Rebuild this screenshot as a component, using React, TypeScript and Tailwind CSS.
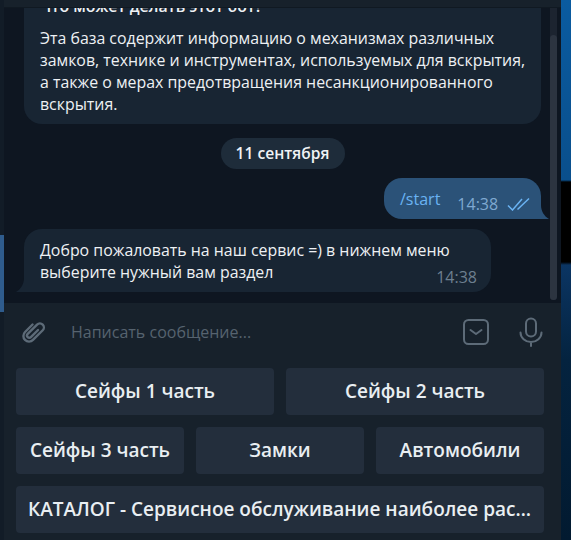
const Time = ({ children, className }: { children: string; className: string }) => (
  <span className={`text-[16px] leading-5 ${className}`}>{children}</span>
);

const KeyButton = ({ label, className = "" }: { label: string; className?: string }) => (
  <button className={`h-[47px] min-w-0 rounded-[4px] bg-[#232e3c] px-3 text-[19px] font-semibold text-[#e9eef2] truncate ${className}`}>
    {label}
  </button>
);

const App = () => {
  return (
    <div className="flex h-[540px] w-[571px] overflow-hidden bg-[#0e1621] font-['Open_Sans',sans-serif]">
      {/* Sliver of the chat list on the left */}
      <div className="flex w-1 flex-col bg-[#121c27]">
        <div className="h-[235px]" />
        <div className="h-[77px] bg-[#2f5c8d]" />
      </div>

      <div className="flex min-w-0 flex-1 flex-col">
        <div className="h-2 shrink-0 border-b border-[#101922] bg-[#17212b]" />

        {/* Messages */}
        <div className="flex h-[295px] shrink-0">
          <div className="flex min-w-0 flex-1 flex-col justify-end overflow-hidden pl-5 pr-[9px] pb-[11px]">
            <div className="shrink-0 whitespace-nowrap rounded-b-[18px] bg-[#182533] px-4 pb-[9px] text-[15.9px] leading-[22px] text-[#eef1f4]">
              <p className="mb-[10px] font-semibold">Что может делать этот бот?</p>
              <p>
                Эта база содержит информацию о механизмах различных
                <br />
                замков, технике и инструментах, используемых для вскрытия,
                <br />
                а также о мерах предотвращения несанкционированного
                <br />
                вскрытия.
              </p>
            </div>

            <div className="mt-[14px] flex shrink-0 justify-center">
              <span className="flex h-[31px] w-[124px] items-center justify-center rounded-full bg-[#1e2c3a] text-[15.6px] font-semibold text-[#f0f3f5]">
                11 сентября
              </span>
            </div>

            <div className="mt-[9px] flex shrink-0 justify-end">
              <div className="relative flex h-[41px] w-[157px] rounded-[18px] rounded-br-none bg-[#2b5278] pl-4">
                <span className="mt-[11px] text-[16px] leading-5 text-[#6ab3f3]">/start</span>
                <Time className="mt-[16px] ml-[17px] text-[#7fa9d1]">14:38</Time>
                <svg className="mt-[19px] ml-[9px] h-[14px] w-[24px]" viewBox="0 0 24 14" fill="none" stroke="#6ab3f3" strokeWidth="1.5">
                  <path d="M1 8.5l4.5 4.5L15 2" />
                  <path d="M10.5 12.5L22 1.5" />
                </svg>
                <svg className="absolute -right-2 bottom-0 h-[14px] w-2" viewBox="0 0 8 14" fill="#2b5278">
                  <path d="M0 0c0 6 3 11 8 14H0z" />
                </svg>
              </div>
            </div>

            <div className="mt-[10px] flex shrink-0">
              <div className="relative h-[63px] w-[467px] rounded-[18px] rounded-bl-none bg-[#182533] px-4 pt-[10px] text-[15.9px] leading-[22px] text-[#eef1f4]">
                <p>
                  Добро пожаловать на наш сервис =) в нижнем меню
                  <br />
                  выберите нужный вам раздел
                </p>
                <Time className="absolute right-[14px] bottom-[5px] text-[#6d7f8f]">14:38</Time>
                <svg className="absolute -left-2 bottom-0 h-[14px] w-2" viewBox="0 0 8 14" fill="#182533">
                  <path d="M8 0c0 6-3 11-8 14h8z" />
                </svg>
              </div>
            </div>
          </div>

          {/* Scrollbar */}
          <div className="mr-1 h-[292px] w-[7px] shrink-0 rounded-b-full bg-[#1c2430] pt-[27px]">
            <div className="h-full rounded-full bg-[#2c3440]" />
          </div>
        </div>

        {/* Composer */}
        <div className="flex min-h-0 flex-1 flex-col bg-[#17212b]">
          <div className="mb-[7px] flex h-[58px] shrink-0 items-center pl-[14px] text-[#5d6b78]">
            <svg className="h-[30px] w-[30px]" viewBox="0 0 24 24" fill="none" stroke="currentColor" strokeWidth="1.9" strokeLinecap="round">
              <path transform="rotate(45 12 12)" d="M7.5 8v8.5a4.5 4.5 0 0 0 9 0V5.5a3.2 3.2 0 0 0-6.4 0v10.6a1.8 1.8 0 0 0 3.6 0V8" />
            </svg>
            <span className="ml-[23px] flex-1 text-[16px] text-[#56636f]">Написать сообщение...</span>
            <svg className="h-[28px] w-[28px]" viewBox="0 0 28 28" fill="none" stroke="currentColor" strokeWidth="2" strokeLinecap="round" strokeLinejoin="round">
              <rect x="2" y="2" width="24" height="24" rx="4.5" />
              <path d="M8.5 12l5.5 4 5.5-4" />
            </svg>
            <svg className="ml-[27px] mr-[16px] h-[30px] w-[28px]" viewBox="0 0 28 30" fill="none" stroke="currentColor" strokeWidth="2" strokeLinecap="round">
              <rect x="9" y="1.5" width="10" height="18" rx="5" />
              <path d="M3.5 15.5a10.5 9.5 0 0 0 21 0M14 25v4" />
            </svg>
          </div>

          {/* Bot keyboard */}
          <div className="flex flex-col gap-3 pl-3 pr-[17px]">
            <div className="grid grid-cols-2 gap-3">
              <KeyButton label="Сейфы 1 часть" />
              <KeyButton label="Сейфы 2 часть" />
            </div>
            <div className="grid grid-cols-3 gap-3">
              <KeyButton label="Сейфы 3 часть" />
              <KeyButton label="Замки" />
              <KeyButton label="Автомобили" />
            </div>
            <KeyButton label="КАТАЛОГ - Сервисное обслуживание наиболее распространённых" />
          </div>
        </div>
      </div>

      {/* Wallpaper behind the window */}
      <div className="w-[10px] shrink-0 bg-[linear-gradient(180deg,#0a5ba0_0,#0a4f8c_180px,#000_182px,#000_262px,#0b3563_265px,#04233f_360px,#021a30_540px)]" />
    </div>
  );
};

export default App;
